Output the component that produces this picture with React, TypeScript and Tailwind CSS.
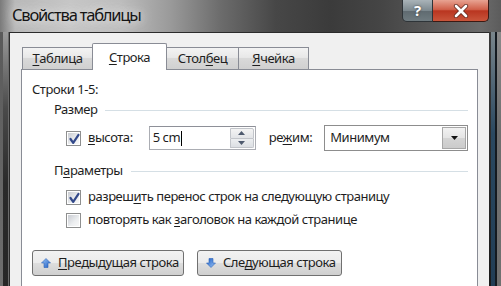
import React from "react";

function Check({ checked }: { checked?: boolean }) {
  return (
    <div className="relative w-[15px] h-[15px] shrink-0 border border-[#8e8f8f] bg-white p-px">
      <div className="w-full h-full bg-[linear-gradient(135deg,#c9ccd2,#eceef0_60%,#f8f8f8)]" />
      {checked && (
        <svg className="absolute inset-0" width="15" height="15" viewBox="0 0 15 15">
          <path d="M3.5 7 L6.2 10.8 L11.5 2.8" fill="none" stroke="#33498a" strokeWidth="2.2" strokeLinecap="round" strokeLinejoin="round" />
        </svg>
      )}
    </div>
  );
}

function Arrow({ down }: { down?: boolean }) {
  return (
    <svg width="10" height="10" viewBox="0 0 10 10" className={down ? "rotate-180" : ""}>
      <defs>
        <linearGradient id={down ? "ad" : "au"} x1="0" y1="0" x2="1" y2="1">
          <stop offset="0" stopColor="#9cc6f7" />
          <stop offset="1" stopColor="#1d5cc2" />
        </linearGradient>
      </defs>
      <path d="M5 0.5 L9.5 5 L7 5 L7 9.5 L3 9.5 L3 5 L0.5 5 Z" fill={`url(#${down ? "ad" : "au"})`} stroke="#2a62b8" strokeWidth="0.6" />
    </svg>
  );
}

function U({ children }: { children: React.ReactNode }) {
  return <span className="underline underline-offset-2 decoration-1">{children}</span>;
}

function Tab({ children, active, w }: { children: React.ReactNode; active?: boolean; w: string }) {
  if (active)
    return (
      <div className={`${w} relative z-10 -mb-px h-[27px] flex items-start justify-center pt-[4px] bg-white border border-b-0 border-[#898c95] rounded-t-[2px]`}>
        {children}
      </div>
    );
  return (
    <div className={`${w} h-[22px] flex items-center justify-center border border-b-0 border-[#898c95] bg-[linear-gradient(#f3f3f3,#e8e8e8_45%,#d9d9d9_50%,#d0d0d0)] text-[#1e1e1e]`}>
      {children}
    </div>
  );
}

export default function App() {
  return (
    <div className="w-[501px] h-[286px] overflow-hidden flex flex-col font-['Noto_Sans',sans-serif] text-[#1e1e1e] bg-[#333]">
      {/* title bar */}
      <div className="h-[32px] shrink-0 flex justify-between items-start bg-[linear-gradient(90deg,#7a7a7a_0%,#b8b8b8_3%,#c6c6c6_14%,#bdbdbd_24%,#9a9a9a_34%,#6c6c6c_44%,#474747_55%,#3b3b3b_66%,#454545_76%,#575757_86%,#6b6b6b_96%,#5c5c5c_100%)]">
        <div className="pl-[12px] pt-[4px] text-[16.5px] tracking-[-1.2px] leading-[22px] text-[#141414] whitespace-nowrap [text-shadow:0_0_8px_#e6e6e6,0_0_14px_#d8d8d8]">
          Свойства таблицы
        </div>
        <div className="flex mr-[12px]">
          <div className="w-[31px] h-[22px] flex items-center justify-center border border-t-0 border-[#2e3438] rounded-bl-[5px] bg-[linear-gradient(#a9b3b8,#7d898f_50%,#5f6a70_52%,#6f7b80)] text-white font-bold text-[15px] leading-none [text-shadow:0_0_2px_#333]">
            ?
          </div>
          <div className="w-[56px] h-[22px] flex items-center justify-center border border-t-0 border-l-0 border-[#3a1a14] rounded-br-[5px] bg-[linear-gradient(#e8a392,#d0604a_45%,#b93520_52%,#c9553b)]">
            <svg width="16" height="14" viewBox="0 0 16 14">
              <path d="M3 2 L13 12 M13 2 L3 12" stroke="#5a2218" strokeWidth="4.2" strokeLinecap="round" />
              <path d="M3 2 L13 12 M13 2 L3 12" stroke="#ffffff" strokeWidth="2.8" strokeLinecap="round" />
            </svg>
          </div>
        </div>
      </div>

      {/* body */}
      <div className="flex flex-1 min-h-0">
        <div className="w-[9px] flex">
          <div className="w-[3px] bg-[linear-gradient(#5a5a5a,#6e6e6e)]" />
          <div className="w-[5px] bg-[linear-gradient(#9a9a9a,#4a4a4a_30%,#2a2a2a_60%,#262626)]" />
          <div className="w-[1px] bg-[#6a6a6a]" />
        </div>

        <div className="flex-1 flex flex-col bg-[#f0f0f0] border-t border-l border-[#2b2b2b] pt-[10px] pl-[11px] pr-[11px] text-[13px] tracking-[-0.45px] whitespace-nowrap">
          {/* tabs */}
          <div className="h-[26px] flex items-end pl-px">
            <Tab w="w-[71px]"><U>Т</U>аблица</Tab>
            <Tab w="w-[75px] -ml-px" active><U>С</U>трока</Tab>
            <Tab w="w-[73px] -ml-px">Стол<U>б</U>ец</Tab>
            <Tab w="w-[71px] -ml-px"><U>Я</U>чейка</Tab>
          </div>

          {/* panel */}
          <div className="flex-1 bg-white border border-[#898c95] border-b-0 pl-[10px] pt-[10px] pr-[9px]">
            <div className="leading-[18px]">Строки 1-5:</div>

            <div className="mt-[3px] flex items-center h-[18px] pl-[22px]">
              <span>Размер</span>
              <div className="flex-1 ml-[8px] h-px bg-[#d5dfe5]" />
            </div>

            <div className="mt-[6px] h-[26px] flex items-center pl-[34px]">
              <Check checked />
              <span className="ml-[7px]"><U>в</U>ысота:</span>
              <div className="ml-[16px] w-[107px] h-[24px] flex items-center border border-[#abadb3] border-t-[#8e9098] bg-white">
                <span className="pl-[3px] flex-1 flex items-center">5 cm<span className="w-px h-[15px] bg-black ml-px" /></span>
                <div className="w-[24px] h-[20px] mr-[1px] flex flex-col">
                  <div className="flex-1 flex items-center justify-center border border-[#c2c5ca] bg-[linear-gradient(#f4f4f4,#e2e4e7)] rounded-tr-[2px]">
                    <svg width="7" height="4" viewBox="0 0 7 4"><path d="M0 4 L3.5 0 L7 4 Z" fill="#4e5a6e" /></svg>
                  </div>
                  <div className="flex-1 flex items-center justify-center border border-t-0 border-[#c2c5ca] bg-[linear-gradient(#eceef0,#dcdfe3)] rounded-br-[2px]">
                    <svg width="7" height="4" viewBox="0 0 7 4"><path d="M0 0 L3.5 4 L7 0 Z" fill="#4e5a6e" /></svg>
                  </div>
                </div>
              </div>
              <span className="ml-[13px]">ре<U>ж</U>им:</span>
              <div className="ml-[12px] w-[144px] h-[26px] flex items-center border border-[#8d8d8d] bg-white">
                <span className="pl-[5px] flex-1">Минимум</span>
                <div className="w-[24px] h-[22px] mr-px flex items-center justify-center border border-[#a7a7a7] bg-[linear-gradient(#f2f2f2,#e4e4e4_50%,#d4d4d4_52%,#cbcbcb)]">
                  <svg width="7" height="4" viewBox="0 0 7 4"><path d="M0 0 L3.5 4 L7 0 Z" fill="#111" /></svg>
                </div>
              </div>
            </div>

            <div className="mt-[11px] flex items-center h-[18px] pl-[22px]">
              <span>П<U>а</U>раметры</span>
              <div className="flex-1 ml-[8px] h-px bg-[#d5dfe5]" />
            </div>

            <div className="mt-[8px] h-[18px] flex items-center pl-[34px]">
              <Check checked />
              <span className="ml-[7px]">разреш<U>и</U>ть перенос строк на следующую страницу</span>
            </div>
            <div className="mt-[5px] h-[18px] flex items-center pl-[34px]">
              <Check />
              <span className="ml-[7px]">повторять как <U>з</U>аголовок на каждой странице</span>
            </div>

            <div className="mt-[21px] flex gap-[13px]">
              <div className="w-[152px] h-[26px] flex items-center pl-[8px] border border-[#707070] rounded-[3px] bg-[linear-gradient(#f2f2f2,#ebebeb_48%,#dddddd_52%,#cfcfcf)]">
                <Arrow />
                <span className="ml-[7px]"><U>П</U>редыдущая строка</span>
              </div>
              <div className="w-[145px] h-[26px] flex items-center pl-[8px] border border-[#707070] rounded-[3px] bg-[linear-gradient(#f2f2f2,#ebebeb_48%,#dddddd_52%,#cfcfcf)]">
                <Arrow down />
                <span className="ml-[7px]">Сле<U>д</U>ующая строка</span>
              </div>
            </div>
          </div>
        </div>

        <div className="w-[12px] flex">
          <div className="w-[2px] bg-[linear-gradient(#3a3a3a,#1a1a1a)]" />
          <div className="w-[4px] bg-[linear-gradient(#7a868c,#2a4860_40%,#213d55)]" />
          <div className="w-[2px] bg-[#141a20]" />
          <div className="w-[4px] bg-[linear-gradient(#8a8a8a,#6e6e6e_40%,#707070)]" />
        </div>
      </div>
    </div>
  );
}
